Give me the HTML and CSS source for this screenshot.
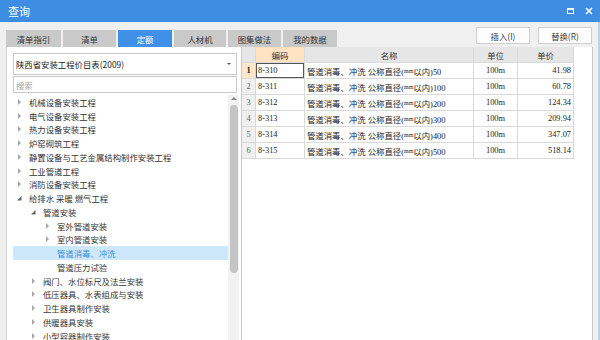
FILE: index.html
```html
<!DOCTYPE html>
<html lang="zh-CN">
<head>
<meta charset="utf-8">
<title>查询</title>
<link rel="stylesheet" href="styles.css">
</head>
<body>
<div class="window">
  <div class="titlebar">
    <span class="title">查询</span>
    <div class="winbtns">
      <span class="restore"></span>
      <svg class="close" width="8" height="8" viewBox="0 0 8 8"><path d="M1 1L7 7M7 1L1 7" stroke="#fff" stroke-width="1.6" fill="none"/></svg>
    </div>
  </div>
  <div class="content">
    <div class="toprow">
      <div class="tabs">
        <div class="tab w55">清单指引</div>
        <div class="tab w53">清单</div>
        <div class="tab w54 active">定额</div>
        <div class="tab w52">人材机</div>
        <div class="tab w53">图集做法</div>
        <div class="tab w54">我的数据</div>
      </div>
      <div class="buttons">
        <div class="btn">插入(I)</div>
        <div class="btn">替换(R)</div>
      </div>
    </div>
    <div class="main">
      <div class="leftpanel">
        <div class="select"><span>陕西省安装工程价目表(2009)</span><span class="caret"></span></div>
        <div class="search">搜索</div>
        <div class="treewrap">
          <div class="tree">
            <div class="row l0"><svg class="arr" viewBox="0 0 12 6"><polygon class="tc" points="1,0 4,3 1,6"/></svg>机械设备安装工程</div>
            <div class="row l0"><svg class="arr" viewBox="0 0 12 6"><polygon class="tc" points="1,0 4,3 1,6"/></svg>电气设备安装工程</div>
            <div class="row l0"><svg class="arr" viewBox="0 0 12 6"><polygon class="tc" points="1,0 4,3 1,6"/></svg>热力设备安装工程</div>
            <div class="row l0"><svg class="arr" viewBox="0 0 12 6"><polygon class="tc" points="1,0 4,3 1,6"/></svg>炉窑砌筑工程</div>
            <div class="row l0"><svg class="arr" viewBox="0 0 12 6"><polygon class="tc" points="1,0 4,3 1,6"/></svg>静置设备与工艺金属结构制作安装工程</div>
            <div class="row l0"><svg class="arr" viewBox="0 0 12 6"><polygon class="tc" points="1,0 4,3 1,6"/></svg>工业管道工程</div>
            <div class="row l0"><svg class="arr" viewBox="0 0 12 6"><polygon class="tc" points="1,0 4,3 1,6"/></svg>消防设备安装工程</div>
            <div class="row l0"><svg class="arr" viewBox="0 0 12 6"><polygon class="te" points="4.5,1 4.5,5.5 0,5.5"/></svg>给排水 采暖 燃气工程</div>
            <div class="row l1"><svg class="arr" viewBox="0 0 12 6"><polygon class="te" points="4.5,1 4.5,5.5 0,5.5"/></svg>管道安装</div>
            <div class="row l2"><svg class="arr" viewBox="0 0 12 6"><polygon class="tc" points="1,0 4,3 1,6"/></svg>室外管道安装</div>
            <div class="row l2"><svg class="arr" viewBox="0 0 12 6"><polygon class="tc" points="1,0 4,3 1,6"/></svg>室内管道安装</div>
            <div class="row l2 sel"><span class="arr"></span>管道消毒、冲洗</div>
            <div class="row l2"><span class="arr"></span>管道压力试验</div>
            <div class="row l1"><svg class="arr" viewBox="0 0 12 6"><polygon class="tc" points="1,0 4,3 1,6"/></svg>阀门、水位标尺及法兰安装</div>
            <div class="row l1"><svg class="arr" viewBox="0 0 12 6"><polygon class="tc" points="1,0 4,3 1,6"/></svg>低压器具、水表组成与安装</div>
            <div class="row l1"><svg class="arr" viewBox="0 0 12 6"><polygon class="tc" points="1,0 4,3 1,6"/></svg>卫生器具制作安装</div>
            <div class="row l1"><svg class="arr" viewBox="0 0 12 6"><polygon class="tc" points="1,0 4,3 1,6"/></svg>供暖器具安装</div>
            <div class="row l1"><svg class="arr" viewBox="0 0 12 6"><polygon class="tc" points="1,0 4,3 1,6"/></svg>小型容器制作安装</div>
          </div>
          <div class="scrollbar">
            <span class="up"></span>
            <span class="thumb"></span>
          </div>
        </div>
      </div>
      <div class="rightpanel">
        <div class="grid">
          <div class="c hd"></div>
          <div class="c hd act">编码</div>
          <div class="c hd">名称</div>
          <div class="c hd">单位</div>
          <div class="c hd">单价</div>

          <div class="c num act">1</div>
          <div class="c code cur">8-310</div>
          <div class="c name">管道消毒、冲洗 公称直径(<span class="mm">mm</span>以内)50</div>
          <div class="c unit">100m</div>
          <div class="c price">41.98</div>

          <div class="c num">2</div>
          <div class="c code">8-311</div>
          <div class="c name">管道消毒、冲洗 公称直径(<span class="mm">mm</span>以内)100</div>
          <div class="c unit">100m</div>
          <div class="c price">60.78</div>

          <div class="c num">3</div>
          <div class="c code">8-312</div>
          <div class="c name">管道消毒、冲洗 公称直径(<span class="mm">mm</span>以内)200</div>
          <div class="c unit">100m</div>
          <div class="c price">124.34</div>

          <div class="c num">4</div>
          <div class="c code">8-313</div>
          <div class="c name">管道消毒、冲洗 公称直径(<span class="mm">mm</span>以内)300</div>
          <div class="c unit">100m</div>
          <div class="c price">209.94</div>

          <div class="c num">5</div>
          <div class="c code">8-314</div>
          <div class="c name">管道消毒、冲洗 公称直径(<span class="mm">mm</span>以内)400</div>
          <div class="c unit">100m</div>
          <div class="c price">347.07</div>

          <div class="c num">6</div>
          <div class="c code">8-315</div>
          <div class="c name">管道消毒、冲洗 公称直径(<span class="mm">mm</span>以内)500</div>
          <div class="c unit">100m</div>
          <div class="c price">518.14</div>
        </div>
      </div>
    </div>
  </div>
</div>
</body>
</html>
```

FILE: styles.css
```css
* { box-sizing: border-box; }
html, body {
  margin: 0;
  padding: 0;
  width: 600px;
  height: 340px;
  overflow: hidden;
  background: #f0f0f0;
  font-family: "Noto Sans CJK SC", "Liberation Sans", sans-serif;
  font-size: 8.4px;
  color: #333;
}
.window {
  width: 600px;
  height: 340px;
  display: flex;
  flex-direction: column;
}
.titlebar {
  height: 22px;
  flex: none;
  background: #3d8de3;
  display: flex;
  align-items: center;
  padding-left: 8px;
  padding-right: 7px;
}
.title {
  color: #fff;
  font-size: 11px;
}
.winbtns {
  margin-left: auto;
  display: flex;
  align-items: center;
  gap: 11px;
}
.restore {
  width: 7px;
  height: 6px;
  border: 1px solid #fff;
  border-top-width: 2px;
}
.close { display: block; }
.content {
  flex: 1;
  display: flex;
  flex-direction: column;
  padding-left: 6px;
  padding-right: 5px;
  border-right: 2px solid #b7d3f0;
  min-height: 0;
}
.toprow {
  height: 25px;
  flex: none;
  display: flex;
}
.tabs {
  display: flex;
  gap: 2px;
  margin-top: 8px;
  height: 17px;
}
.tab {
  height: 17px;
  background: #c9c9c9;
  color: #333;
  display: flex;
  align-items: center;
  justify-content: center;
}
.tab.active { background: #3f90e6; color: #fff; }
.w52 { width: 52px; }
.w53 { width: 53px; }
.w54 { width: 54px; }
.w55 { width: 55px; }
.buttons {
  margin-left: auto;
  display: flex;
  gap: 8px;
  margin-top: 5px;
  margin-right: 1px;
}
.btn {
  width: 54px;
  height: 17px;
  background: #fdfdfd;
  border: 1px solid #cfcfcf;
  display: flex;
  align-items: center;
  justify-content: center;
  color: #444;
}
.main {
  flex: 1;
  display: flex;
  min-height: 0;
}
.leftpanel {
  width: 235px;
  flex: none;
  background: #fff;
  border-left: 1px solid #d6d6d6;
  padding-top: 6px;
  overflow: hidden;
}
.select {
  margin-left: 6px;
  width: 224px;
  height: 22px;
  border: 1px solid #c8c8c8;
  display: flex;
  align-items: center;
  padding-left: 2px;
  padding-right: 5px;
  color: #222;
}
.caret {
  margin-left: auto;
  width: 0;
  height: 0;
  border-left: 2px solid transparent;
  border-right: 2px solid transparent;
  border-top: 2px solid #555;
}
.search {
  margin-left: 6px;
  margin-top: 1px;
  width: 224px;
  height: 17px;
  border: 1px solid #c8c8c8;
  display: flex;
  align-items: center;
  padding-left: 2px;
  color: #a8a8a8;
}
.treewrap {
  display: flex;
  margin-top: 2px;
}
.tree {
  margin-left: 6px;
  width: 215px;
}
.row {
  height: 13.75px;
  display: flex;
  align-items: center;
  white-space: nowrap;
  color: #333;
}
.row.l0 { padding-left: 4px; }
.row.l1 { padding-left: 18px; }
.row.l2 { padding-left: 32px; }
.row.sel { background: #cde8fb; color: #3b8fd9; }
.arr {
  display: block;
  width: 12px;
  height: 6px;
  flex: none;
}
.tc { fill: #a6a6a6; }
.te { fill: #666; }
.scrollbar {
  width: 11px;
  flex: none;
  height: 260px;
  background: #f2f2f2;
  display: flex;
  flex-direction: column;
  align-items: center;
  padding-top: 2px;
}
.up {
  width: 0;
  height: 0;
  border-left: 3px solid transparent;
  border-right: 3px solid transparent;
  border-bottom: 3px solid #888;
}
.thumb {
  margin-top: 5px;
  width: 8px;
  height: 168px;
  border-radius: 4px;
  background: #c4c4c4;
}
.rightpanel {
  flex: 1;
  background: #fff;
  border-left: 1px solid #c8c8c8;
  border-right: 1px solid #c8c8c8;
}
.grid {
  display: grid;
  grid-template-columns: 14px 49px 169px 44px 56px;
  grid-auto-rows: 16px;
  width: 332px;
}
.c {
  border-right: 1px solid #d9d9d9;
  border-bottom: 1px solid #d9d9d9;
  display: flex;
  align-items: center;
  white-space: pre;
  overflow: hidden;
  font-family: "Liberation Serif", "Noto Sans CJK SC", serif;
  font-size: 8.4px;
  color: #222;
}
.c.hd {
  background: #e6e6e6;
  justify-content: center;
  font-family: "Noto Sans CJK SC", sans-serif;
  color: #333;
}
.c.hd.act { background: #fde3c1; }
.c.num {
  background: #f0f0f0;
  justify-content: center;
  color: #666;
}
.c.num.act { background: #fde7c8; color: #222; font-weight: bold; }
.c.code { padding-left: 2px; }
.c.code.cur { box-shadow: inset 0 0 0 1px #555; }
.c.name { padding-left: 2px; }
.mm { font-size: 6px; }
.c.unit { justify-content: center; }
.c.price { justify-content: flex-end; padding-right: 2px; }
```
